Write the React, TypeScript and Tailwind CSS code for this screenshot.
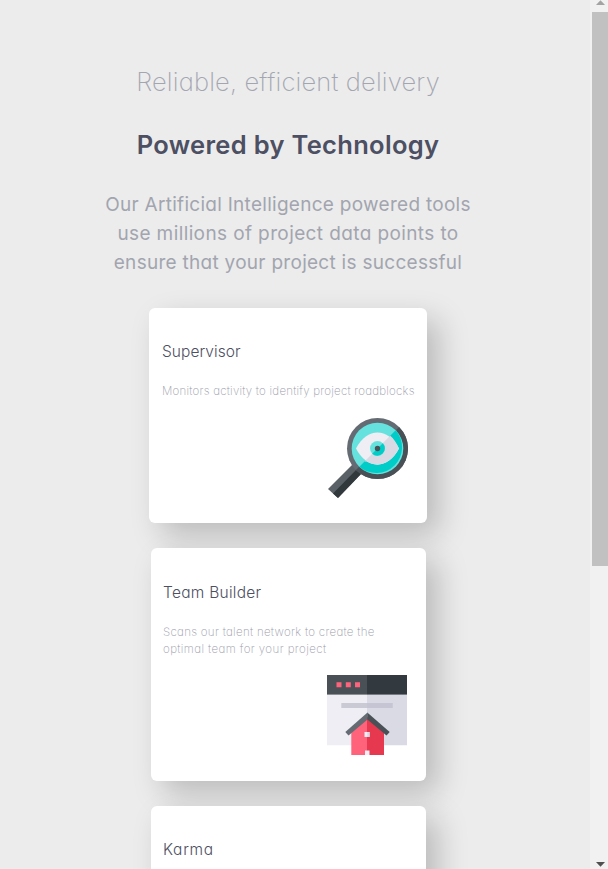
import type { ReactNode } from "react";

const shadow = "shadow-[12px_12px_30px_rgba(0,0,0,0.21)]";

function SupervisorIcon() {
  return (
    <svg width="80" height="80" viewBox="0 0 80 80" className="block">
      <path d="M24.5 46.5 33.5 55.5 10 80 0 71Z" fill="#5a6268" />
      <path d="M29 51 33.5 55.5 10 80 5 75.5Z" fill="#32393c" />
      <circle cx="49.5" cy="30.5" r="30.5" fill="#646b72" />
      <path d="M71.1 8.9A30.5 30.5 0 0 1 27.9 52.1Z" fill="#495157" />
      <circle cx="49.5" cy="30.5" r="25.8" fill="#66e2de" />
      <path d="M67.7 12.3A25.8 25.8 0 0 1 31.3 48.7Z" fill="#00ccc8" />
      <path d="M28 30.5C39 9 60 9 71 30.5C60 52 39 52 28 30.5Z" fill="#efeef4" />
      <path d="M62.2 17.8C65.5 20.5 68.5 25 71 30.5C63 46 49.5 50 38.5 43.5L36.5 43.5Z" fill="#dadae5" />
      <circle cx="49.5" cy="30.5" r="7.5" fill="#66e2de" />
      <path d="M54.8 25.2A7.5 7.5 0 0 1 44.2 35.8Z" fill="#00ccc8" />
      <circle cx="49.5" cy="30.5" r="2.7" fill="#495157" />
    </svg>
  );
}

function TeamIcon() {
  return (
    <svg width="80" height="80" viewBox="0 0 80 80" className="block">
      <path d="M0 19H40V70.3H0Z" fill="#efeef4" />
      <path d="M40 19H80V70.3H40Z" fill="#dadae5" />
      <path d="M0 0H40V19.5H0Z" fill="#495157" />
      <path d="M40 0H80V19.5H40Z" fill="#32393f" />
      <path d="M0 19H40V20H0Z" fill="#8b9095" />
      <path d="M40 19H80V20H40Z" fill="#777b84" />
      <path d="M9.5 7.2h5v5h-5zM18.8 7.2h5v5h-5zM28 7.2h5v5h-5z" fill="#ff637b" />
      <path d="M14.3 28H40V33H14.3Z" fill="#cacad5" />
      <path d="M40 28H65.7V33H40Z" fill="#c5c5d3" />
      <path d="M24.3 55 40.5 42V80H24.3Z" fill="#ff637b" />
      <path d="M40 42 57 55V80H40Z" fill="#e63950" />
      <path d="M40.5 37.5V44.5L21.5 60.5 18.3 57Z" fill="#646b72" />
      <path d="M40.3 37.5V44.5L59.5 60.5 62.7 57Z" fill="#495157" />
      <path d="M37.5 57h5v5h-5zM38 75.5h4.5V80H38z" fill="#efeef4" />
      <path d="M40.3 57h2.3v5h-2.3z" fill="#dadae5" />
    </svg>
  );
}

function Card({ title, lines, icon, className }: { title: ReactNode; lines?: ReactNode; icon?: ReactNode; className: string }) {
  return (
    <article className={`flex shrink-0 flex-col justify-between rounded-md bg-white ${shadow} ${className}`}>
      <div>
        <h3 className="text-[15.5px] leading-6 font-light whitespace-nowrap text-[#4d4f62]">{title}</h3>
        <div className="mt-[19px] text-[11.5px] leading-[17px] font-extralight whitespace-nowrap text-[#9a9caa]">{lines}</div>
      </div>
      <div className="mr-[19px] self-end">{icon}</div>
    </article>
  );
}

export default function App() {
  return (
    <div className="flex h-[869px] w-[608px] overflow-hidden bg-[#ececec] font-['Inter',sans-serif] [font-feature-settings:'cv11']">
      <main className="flex w-[590px] shrink-0 flex-col items-center overflow-hidden pr-[14px] text-center">
        <h1 className="mt-[62px] text-[25.5px] leading-10 font-extralight tracking-[0.18px] whitespace-nowrap text-[#a3a6b1]">Reliable, efficient delivery</h1>
        <h2 className="mt-[23px] text-[25.5px] leading-10 font-semibold tracking-[0.32px] whitespace-nowrap text-[#4d4f62]">Powered by Technology</h2>
        <p className="mt-[25px] flex flex-col items-center text-[19px] leading-[29px] whitespace-nowrap text-[#a2a5af]">
          <span className="tracking-[0.28px]">Our Artificial Intelligence powered tools</span>
          <span className="tracking-[0.39px]">use millions of project data points to</span>
          <span className="tracking-[0.28px]">ensure that your project is successful</span>
        </p>
        <section className="mt-[31px] flex flex-col items-center gap-[25px] text-left">
          <Card
            className="h-[215px] w-[278px] pt-8 pb-[25px] pl-[13px]"
            title={<span className="tracking-[0.05px]">Supervisor</span>}
            lines={<span className="tracking-[0.23px]">Monitors activity to identify project roadblocks</span>}
            icon={<SupervisorIcon />}
          />
          <Card
            className="ml-px h-[233px] w-[275px] pt-[33px] pb-[26px] pl-3"
            title={<span className="tracking-[0.27px]">Team Builder</span>}
            lines={
              <>
                <span className="block w-fit tracking-[0.3px]">Scans our talent network to create the</span>
                <span className="block w-fit tracking-[0.41px]">optimal team for your project</span>
              </>
            }
            icon={<TeamIcon />}
          />
          <Card className="ml-px h-[233px] w-[275px] pt-8 pb-[26px] pl-3" title={<span className="tracking-[0.7px]">Karma</span>} />
        </section>
      </main>
      <aside className="flex w-[18px] shrink-0 flex-col items-end justify-between bg-[#f1f1f1]">
        <div className="flex w-4 flex-col items-center">
          <svg width="16" height="12" viewBox="0 0 16 12">
            <path d="M4 5 8.5 0.2 13 5Z" fill="#a3a3a3" />
          </svg>
          <div className="h-[554px] w-4 bg-[#c1c1c1]" />
        </div>
        <svg width="16" height="12" viewBox="0 0 16 12">
          <path d="M4 5 8.5 9.8 13 5Z" fill="#505050" />
        </svg>
      </aside>
    </div>
  );
}
